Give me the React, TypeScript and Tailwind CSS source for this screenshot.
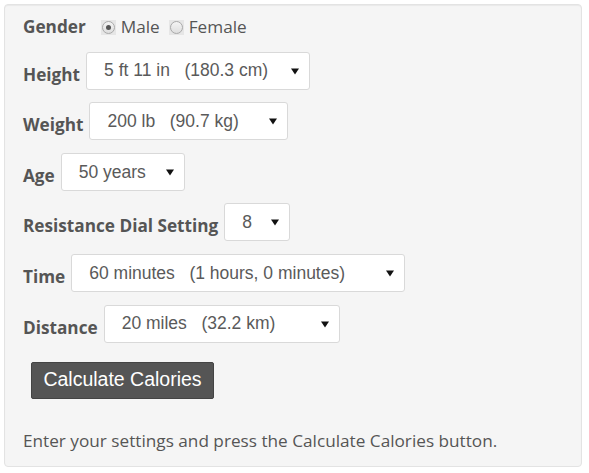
const labelFont = { fontFamily: '"Open Sans", "Liberation Sans", sans-serif' };

interface FieldProps {
  label: string;
  value: string;
  width: string;
}

function Radio({ checked }: { checked?: boolean }) {
  return (
    <span className="inline-flex h-[15px] w-[15px] items-center justify-center bg-[#e6e6e6]">
      <span className="flex h-[13px] w-[13px] items-center justify-center rounded-full border border-[#a9a9a9] bg-gradient-to-b from-[#f4f4f4] to-[#dedede]">
        {checked && <span className="h-[5px] w-[5px] rounded-full bg-[#555]" />}
      </span>
    </span>
  );
}

function SelectField({ label, value, width }: FieldProps) {
  return (
    <div className="flex items-end">
      <span className="mb-[3px] mr-[6px] text-[17.2px] font-bold leading-6 text-[#555]">{label}</span>
      <div
        className={`flex h-[38px] items-center justify-between rounded-[3px] border border-[#d9d9d9] bg-white pl-[17px] pr-[9px] font-['Liberation_Sans',Arial,sans-serif] text-[17.5px] text-[#5a5a5a] ${width}`}
      >
        <span className="whitespace-pre">{value}</span>
        <svg width="8" height="8" viewBox="0 0 8 8" className="mr-[1px]">
          <path d="M0 1.5h8L4 7.5z" fill="#111" />
        </svg>
      </div>
    </div>
  );
}

export default function App() {
  return (
    <div className="h-[473px] w-[589px] bg-white p-[4px]" style={labelFont}>
      <div className="h-[463px] w-[578px] rounded-[4px] border border-[#e3e3e3] bg-[#f5f5f5] px-[18px] pt-[10px] shadow-[inset_0_1px_1px_rgba(0,0,0,0.05)]">
        <div className="flex flex-col gap-[12.6px]">
          <div className="flex h-6 items-center text-[17.2px] text-[#555]">
            <span className="mr-[15px] font-bold">Gender</span>
            <Radio checked />
            <span className="ml-[5px] mr-[9px]">Male</span>
            <Radio />
            <span className="ml-[5px]">Female</span>
          </div>
          <SelectField label="Height" value="5 ft 11 in   (180.3 cm)" width="w-[224px]" />
          <SelectField label="Weight" value="200 lb   (90.7 kg)" width="w-[199px]" />
          <SelectField label="Age" value="50 years" width="w-[124px]" />
          <SelectField label="Resistance Dial Setting" value="8" width="w-[66px]" />
          <SelectField label="Time" value="60 minutes   (1 hours, 0 minutes)" width="w-[334px]" />
          <SelectField label="Distance" value="20 miles   (32.2 km)" width="w-[236px]" />
        </div>
        <button className="ml-[8px] mt-[19px] flex h-[37px] w-[183px] items-center justify-center rounded-[2px] border border-[#444] bg-[#555] font-['Liberation_Sans',Arial,sans-serif] text-[19.5px] text-white">
          Calculate Calories
        </button>
        <p className="mt-[30px] text-[17.2px] leading-6 text-[#555]">
          Enter your settings and press the Calculate Calories button.
        </p>
      </div>
    </div>
  );
}
